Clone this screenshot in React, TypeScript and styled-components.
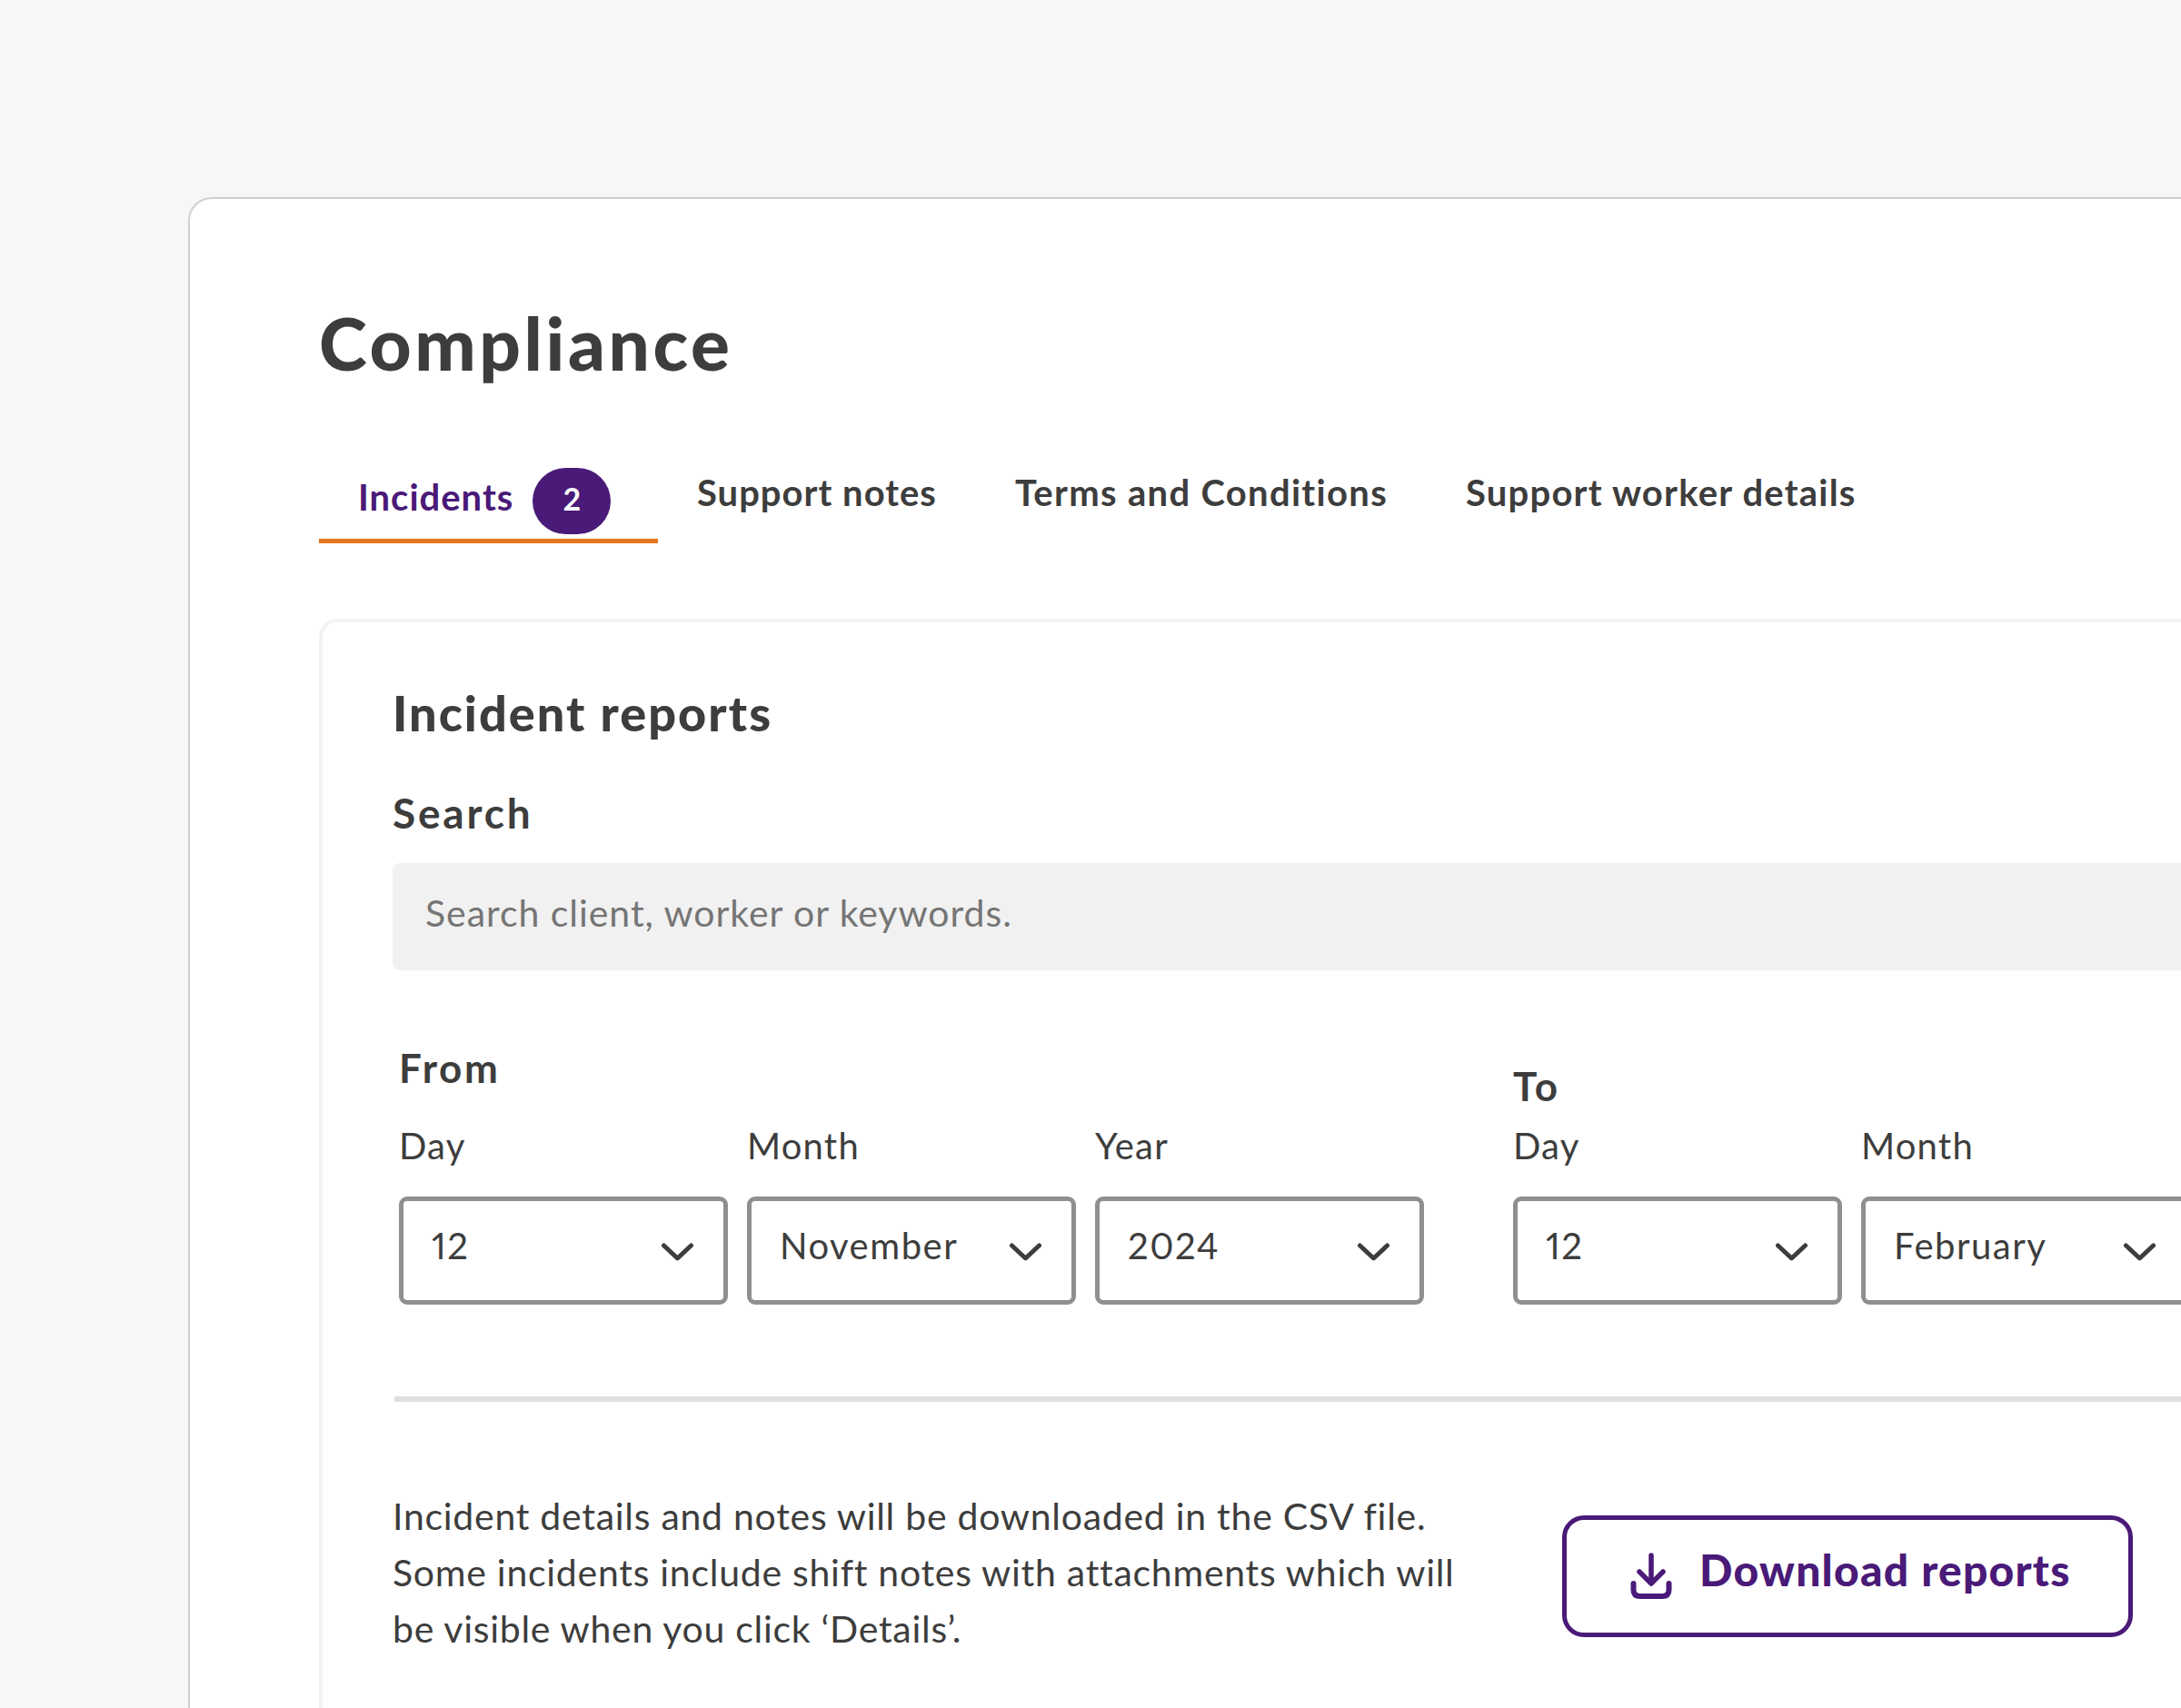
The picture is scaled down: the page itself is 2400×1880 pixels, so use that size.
import React from "react";
import styled, { createGlobalStyle } from "styled-components";

const GlobalStyle = createGlobalStyle`
  html, body {
    margin: 0;
    padding: 0;
    background: #f7f7f7;
  }
  * {
    box-sizing: border-box;
  }
`;

const Chevron = () => (
  <ChevronSvg viewBox="0 0 35 20" fill="none">
    <path d="M2.5 3 L17.5 17 L32.5 3" stroke="#3d3d3d" strokeWidth="5" strokeLinecap="round" strokeLinejoin="round" />
  </ChevronSvg>
);

const DownloadIcon = () => (
  <IconSvg viewBox="0 0 46 51" fill="none">
    <path d="M23 3 V33" stroke="#4a1a78" strokeWidth="5.5" strokeLinecap="round" />
    <path d="M10 21 L23 34 L36 21" stroke="#4a1a78" strokeWidth="5.5" strokeLinecap="round" strokeLinejoin="round" />
    <path d="M3.5 34 V41 Q3.5 48 11 48 H35 Q42.5 48 42.5 41 V34" stroke="#4a1a78" strokeWidth="6" strokeLinecap="round" />
  </IconSvg>
);

const DateField = ({ label, value }: { label: string; value: string }) => (
  <FieldColumn>
    <FieldLabel>{label}</FieldLabel>
    <SelectBox>
      <SelectValue>{value}</SelectValue>
      <Chevron />
    </SelectBox>
  </FieldColumn>
);

const App = () => {
  return (
    <>
      <GlobalStyle />
      <Page>
        <OuterCard>
          <Title>Compliance</Title>
          <Tabs>
            <ActiveTab>
              <ActiveLabel>Incidents</ActiveLabel>
              <Badge>2</Badge>
            </ActiveTab>
            <Tab $spacing={1}>Support notes</Tab>
            <Tab $spacing={1.3}>Terms and Conditions</Tab>
            <Tab $spacing={1.2}>Support worker details</Tab>
          </Tabs>
          <InnerCard>
            <SectionTitle>Incident reports</SectionTitle>
            <SearchLabel>Search</SearchLabel>
            <SearchInput placeholder="Search client, worker or keywords." readOnly />
            <DateRow>
              <DateGroup>
                <GroupLabel $gap={33}>From</GroupLabel>
                <DateFields>
                  <DateField label="Day" value="12" />
                  <DateField label="Month" value="November" />
                  <DateField label="Year" value="2024" />
                </DateFields>
              </DateGroup>
              <DateGroup>
                <GroupLabel $gap={13}>To</GroupLabel>
                <DateFields>
                  <DateField label="Day" value="12" />
                  <DateField label="Month" value="February" />
                </DateFields>
              </DateGroup>
            </DateRow>
            <Divider />
            <DownloadRow>
              <Info>
                Incident details and notes will be downloaded in the CSV file.
                <br />
                Some incidents include shift notes with attachments which will
                <br />
                be visible when you click ‘Details’.
              </Info>
              <DownloadButton>
                <DownloadIcon />
                <ButtonText>Download reports</ButtonText>
              </DownloadButton>
            </DownloadRow>
          </InnerCard>
        </OuterCard>
      </Page>
    </>
  );
};

export default App;

const Page = styled.div`
  width: 2400px;
  height: 1880px;
  overflow: hidden;
  padding: 217px 0 0 207px;
  background: #f7f7f7;
  font-family: "Lato", "Open Sans", sans-serif;
  color: #3d3d3d;
`;

const OuterCard = styled.div`
  width: 2400px;
  height: 1800px;
  background: #fff;
  border: 2px solid #cfcfcf;
  border-radius: 26px 0 0 0;
  padding: 110px 0 0 142px;
`;

const Title = styled.h1`
  margin: 0;
  width: fit-content;
  font-size: 80px;
  line-height: 96px;
  font-weight: 900;
  letter-spacing: 3.6px;
`;

const Tabs = styled.div`
  display: flex;
  align-items: flex-start;
  margin-top: 90px;
  height: 83px;
`;

const ActiveTab = styled.div`
  display: flex;
  align-items: flex-start;
  width: 373px;
  height: 83px;
  padding-left: 43px;
  border-bottom: 5px solid #e4761f;
`;

const ActiveLabel = styled.span`
  font-size: 40px;
  line-height: 48px;
  margin-top: 8px;
  font-weight: 700;
  letter-spacing: 1px;
  color: #4a1a78;
`;

const Badge = styled.span`
  width: 86px;
  height: 73px;
  margin-left: 21px;
  padding-bottom: 6px;
  border-radius: 37px;
  background: #4a1a78;
  color: #fff;
  font-size: 34px;
  font-weight: 700;
  display: flex;
  align-items: center;
  justify-content: center;
`;

const Tab = styled.div<{ $spacing: number }>`
  padding: 3px 43px 0;
  font-size: 40px;
  line-height: 48px;
  font-weight: 700;
  letter-spacing: ${(p) => p.$spacing}px;
`;

const InnerCard = styled.div`
  width: 2400px;
  height: 1300px;
  margin-top: 83px;
  border: 4px solid #f3f3f3;
  border-radius: 20px 0 0 0;
  padding: 68px 0 0 77px;
`;

const SectionTitle = styled.h2`
  margin: 0;
  width: fit-content;
  font-size: 54px;
  line-height: 64px;
  font-weight: 900;
  letter-spacing: 2.05px;
`;

const SearchLabel = styled.div`
  margin-top: 52px;
  width: fit-content;
  font-size: 46px;
  line-height: 52px;
  font-weight: 700;
  letter-spacing: 2.8px;
`;

const SearchInput = styled.input`
  display: block;
  width: 2200px;
  height: 118px;
  margin-top: 29px;
  padding: 0 0 10px 36px;
  border: none;
  border-radius: 8px;
  background: #f1f1f1;
  font-family: inherit;
  font-size: 41px;
  letter-spacing: 0.95px;
  outline: none;
  &::placeholder {
    color: #757575;
    opacity: 1;
  }
`;

const DateRow = styled.div`
  display: flex;
  align-items: flex-end;
  gap: 98px;
  margin: 81px 0 0 7px;
`;

const DateGroup = styled.div`
  display: flex;
  flex-direction: column;
`;

const GroupLabel = styled.div<{ $gap: number }>`
  font-size: 44px;
  line-height: 52px;
  font-weight: 700;
  letter-spacing: 2.6px;
  margin-bottom: ${(p) => p.$gap}px;
`;

const DateFields = styled.div`
  display: flex;
  gap: 21px;
`;

const FieldColumn = styled.div`
  display: flex;
  flex-direction: column;
  width: 362px;
`;

const FieldLabel = styled.div`
  font-size: 40px;
  line-height: 48px;
  letter-spacing: 1.2px;
  margin-top: 3px;
  margin-bottom: 32px;
`;

const SelectBox = styled.div`
  display: flex;
  align-items: flex-start;
  justify-content: space-between;
  height: 119px;
  padding: 0 33px 0 31px;
  border: 5px solid #8f8f8f;
  border-radius: 9px;
  background: #fff;
`;

const SelectValue = styled.span`
  font-size: 40px;
  line-height: 48px;
  letter-spacing: 1.5px;
  font-feature-settings: "pnum";
  margin-top: 25px;
`;

const ChevronSvg = styled.svg`
  width: 35px;
  height: 20px;
  margin-top: 46px;
`;

const Divider = styled.div`
  height: 6px;
  margin: 101px 0 0 2px;
  background: #e0e0de;
`;

const DownloadRow = styled.div`
  display: flex;
  align-items: flex-start;
  margin-top: 95px;
`;

const Info = styled.p`
  margin: 0;
  width: 1287px;
  font-size: 41px;
  line-height: 62px;
  letter-spacing: 0.72px;
  white-space: nowrap;
`;

const DownloadButton = styled.button`
  display: flex;
  align-items: flex-start;
  gap: 30px;
  width: 628px;
  height: 134px;
  margin-top: 30px;
  padding: 36px 0 0 70px;
  background: #fff;
  border: 5px solid #4a1a78;
  border-radius: 24px;
  color: #4a1a78;
  font-family: inherit;
  font-size: 48px;
  line-height: 58px;
  font-weight: 900;
  letter-spacing: 1.25px;
`;

const ButtonText = styled.span`
  margin-top: -10px;
`;

const IconSvg = styled.svg`
  width: 46px;
  height: 51px;
  flex: none;
`;
